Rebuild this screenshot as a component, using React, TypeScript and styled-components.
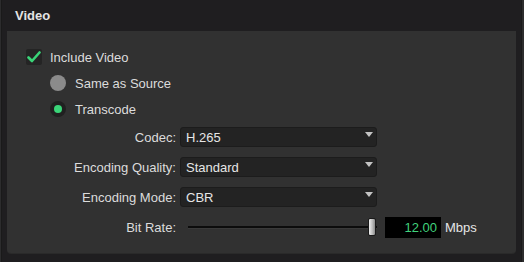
import { Fragment } from 'react'
import styled, { createGlobalStyle } from 'styled-components'

const GlobalStyle = createGlobalStyle`
  html, body {
    margin: 0;
    padding: 0;
    background: #1f1e20;
  }
  body {
    font-family: 'Liberation Sans', Arial, sans-serif;
    -webkit-font-smoothing: antialiased;
  }
`

const Window = styled.div`
  width: 524px;
  height: 262px;
  display: flex;
  background: #1f1e20;
  overflow: hidden;
`

const LeftEdge = styled.div`
  width: 2px;
  background: #2c2c2d;
  border-right: 1px solid #1a1a1a;
  box-sizing: border-box;
`

const RightEdge = styled.div`
  width: 3px;
  background: #2c2c2d;
  border-left: 1px solid #1a1a1a;
  margin-left: 1px;
  box-sizing: border-box;
`

const Main = styled.div`
  flex: 1;
  display: flex;
  flex-direction: column;
  padding: 0 4px 0 5px;
  min-width: 0;
`

const SectionTitle = styled.div`
  height: 31px;
  display: flex;
  align-items: center;
  padding: 0 0 1px 8px;
  box-sizing: border-box;
  font-size: 13px;
  font-weight: 700;
  color: #e4e4e4;
`

const Panel = styled.div`
  height: 222px;
  background: #313131;
  border-radius: 0 0 4px 4px;
  box-shadow: 0 1px 0 #2a2a2a;
  padding-top: 13px;
  box-sizing: border-box;
  display: flex;
  flex-direction: column;
`

const OptionRow = styled.div<{ indent: number }>`
  height: 26px;
  display: flex;
  align-items: center;
  padding-left: ${(p) => p.indent}px;
  gap: 8px;
  font-size: 13px;
  color: #dcdcdc;
`

const CheckBox = styled.div`
  width: 16px;
  height: 16px;
  background: #242424;
  border-radius: 2px;
  display: flex;
  align-items: center;
  justify-content: center;
`

const Radio = styled.div<{ checked?: boolean }>`
  width: 16px;
  height: 16px;
  border-radius: 50%;
  margin-right: 1px;
  background: ${(p) => (p.checked ? '#202020' : '#8b8b8b')};
  display: flex;
  align-items: center;
  justify-content: center;

  &::after {
    content: '';
    display: ${(p) => (p.checked ? 'block' : 'none')};
    width: 8px;
    height: 8px;
    border-radius: 50%;
    background: #3ad578;
  }
`

const Form = styled.div`
  display: grid;
  grid-template-columns: 170px 197px auto;
  grid-auto-rows: 30px;
  column-gap: 3px;
  align-items: center;
`

const Label = styled.div`
  text-align: right;
  font-size: 13px;
  color: #dcdcdc;
  padding-right: 1px;
`

const Select = styled.div`
  position: relative;
  height: 20px;
  background: #232323;
  border: 1px solid #1c1c1c;
  border-radius: 3px;
  box-sizing: border-box;
  display: flex;
  align-items: center;
  padding-left: 5px;
  font-size: 13px;
  color: #e6e6e6;
`

const Arrow = styled.span`
  position: absolute;
  right: 3px;
  top: 4px;
  width: 0;
  height: 0;
  border-left: 4px solid transparent;
  border-right: 4px solid transparent;
  border-top: 5px solid #c4c4c4;
`

const Slider = styled.div`
  position: relative;
  height: 20px;
  display: flex;
  align-items: center;
`

const Track = styled.div`
  flex: 1;
  margin-left: 8px;
  height: 2px;
  background: #0c0c0c;
  box-shadow: 0 1px 0 #3a3a3a;
`

const Thumb = styled.div`
  position: absolute;
  right: 1px;
  top: 1px;
  width: 8px;
  height: 18px;
  border-radius: 2px;
  background: linear-gradient(to right, #f0f0f0, #b8b8b8 60%, #8a8a8a);
  border: 1px solid #1a1a1a;
  box-sizing: border-box;
`

const ValueGroup = styled.div`
  display: flex;
  align-items: center;
  gap: 4px;
  margin-left: 5px;
  font-size: 13px;
  color: #e6e6e6;
`

const ValueBox = styled.div`
  width: 56px;
  height: 21px;
  background: #000;
  color: #40d27c;
  font-size: 13px;
  display: flex;
  align-items: center;
  justify-content: flex-end;
  padding-right: 4px;
  box-sizing: border-box;
`

const CheckIcon = () => (
  <svg width="14" height="12" viewBox="0 0 14 12">
    <path d="M1.5 6.5 L5 10 L12.5 1.5" fill="none" stroke="#3ad578" strokeWidth="2.6" strokeLinecap="round" strokeLinejoin="round" />
  </svg>
)

const selects = [
  { label: 'Codec:', value: 'H.265' },
  { label: 'Encoding Quality:', value: 'Standard' },
  { label: 'Encoding Mode:', value: 'CBR' },
]

export default function App() {
  return (
    <>
      <GlobalStyle />
      <Window>
        <LeftEdge />
        <Main>
          <SectionTitle>Video</SectionTitle>
          <Panel>
            <OptionRow indent={19}>
              <CheckBox>
                <CheckIcon />
              </CheckBox>
              Include Video
            </OptionRow>
            <OptionRow indent={43}>
              <Radio />
              Same as Source
            </OptionRow>
            <OptionRow indent={43}>
              <Radio checked />
              Transcode
            </OptionRow>
            <Form>
              {selects.map((s) => (
                <Fragment key={s.label}>
                  <Label>{s.label}</Label>
                  <Select>
                    {s.value}
                    <Arrow />
                  </Select>
                  <div />
                </Fragment>
              ))}
              <Label>Bit Rate:</Label>
              <Slider>
                <Track />
                <Thumb />
              </Slider>
              <ValueGroup>
                <ValueBox>12.00</ValueBox>
                Mbps
              </ValueGroup>
            </Form>
          </Panel>
        </Main>
        <RightEdge />
      </Window>
    </>
  )
}
